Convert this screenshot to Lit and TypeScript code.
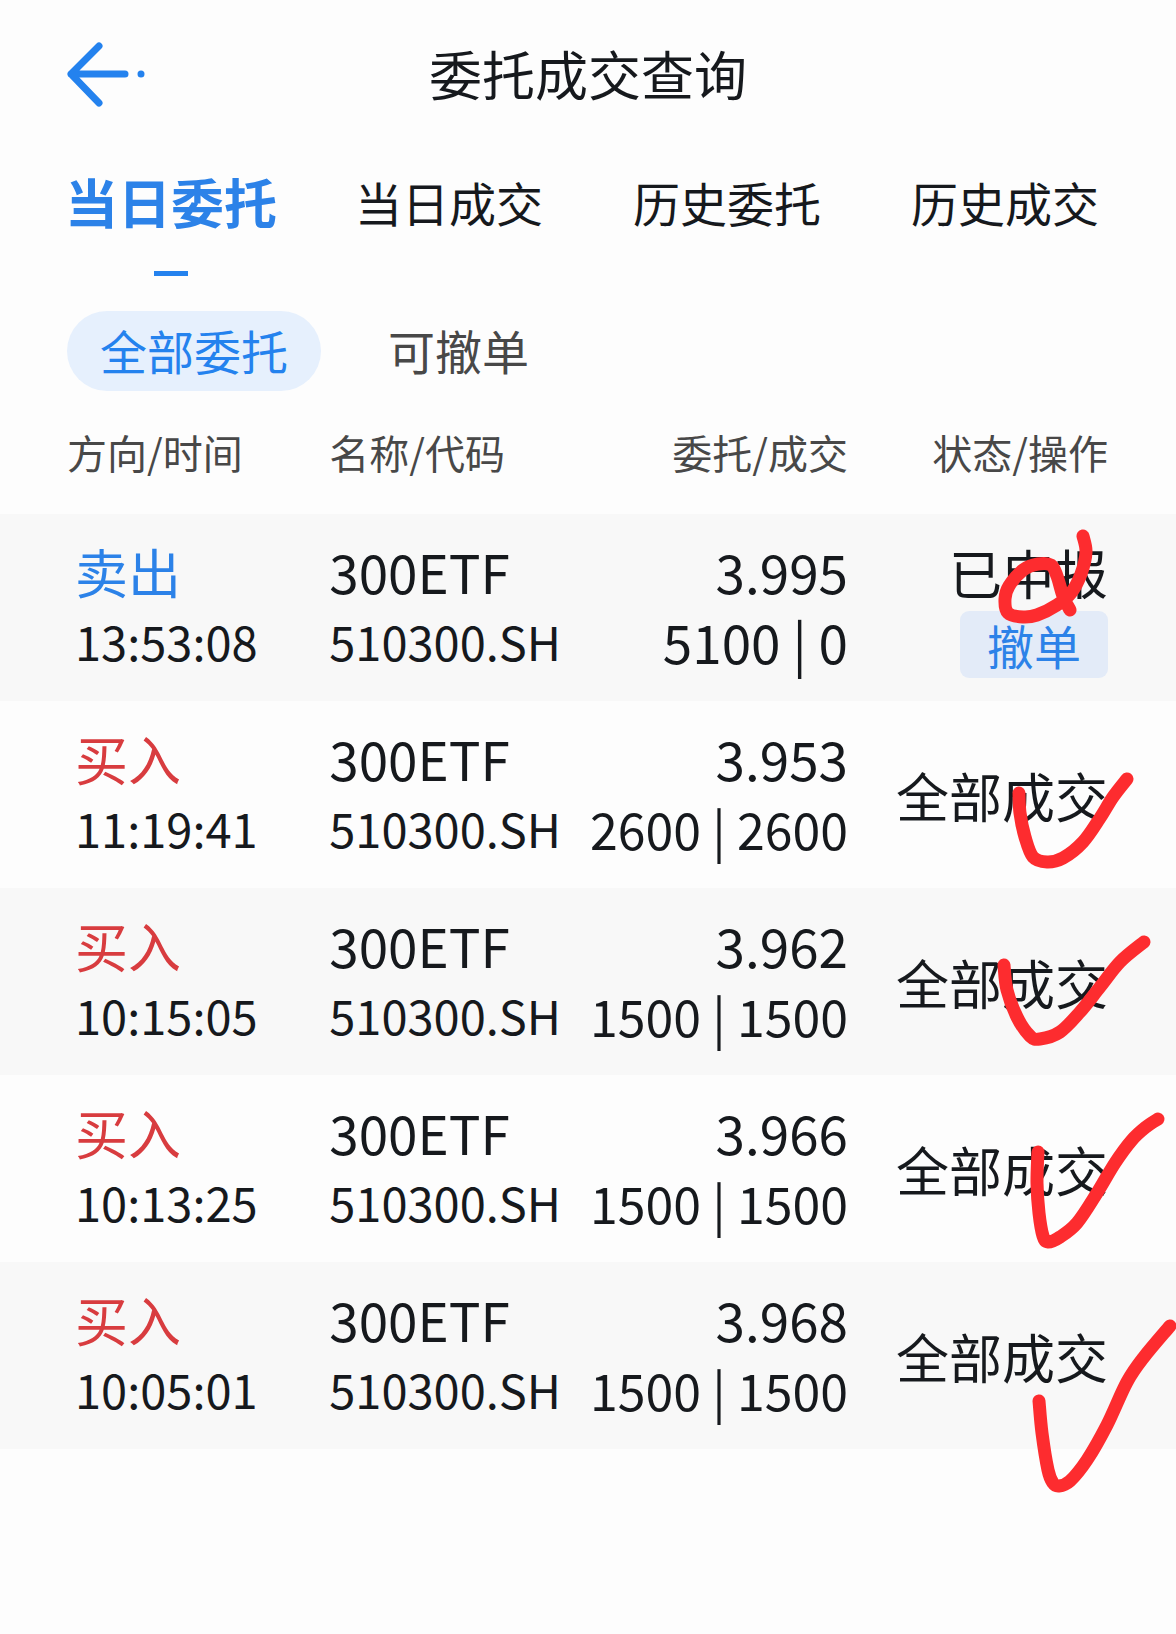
import { LitElement, html, css, svg } from "lit";
import { customElement, property, state } from "lit/decorators.js";
import { classMap } from "lit/directives/class-map.js";

type Point = [number, number];

interface Order {
  side: "卖出" | "买入";
  time: string;
  name: string;
  code: string;
  price: string;
  ordered: number;
  filled: number;
  status: string;
  cancellable?: boolean;
}

const ORDERS: Order[] = [
  { side: "卖出", time: "13:53:08", name: "300ETF", code: "510300.SH", price: "3.995", ordered: 5100, filled: 0, status: "已申报", cancellable: true },
  { side: "买入", time: "11:19:41", name: "300ETF", code: "510300.SH", price: "3.953", ordered: 2600, filled: 2600, status: "全部成交" },
  { side: "买入", time: "10:15:05", name: "300ETF", code: "510300.SH", price: "3.962", ordered: 1500, filled: 1500, status: "全部成交" },
  { side: "买入", time: "10:13:25", name: "300ETF", code: "510300.SH", price: "3.966", ordered: 1500, filled: 1500, status: "全部成交" },
  { side: "买入", time: "10:05:01", name: "300ETF", code: "510300.SH", price: "3.968", ordered: 1500, filled: 1500, status: "全部成交" },
];

const TABS = ["当日委托", "当日成交", "历史委托", "历史成交"];
const FILTERS = ["全部委托", "可撤单"];
const COLUMNS = ["方向/时间", "名称/代码", "委托/成交", "状态/操作"];

/* Hand-drawn pen strokes, as sampled points. */
const STROKES: Point[][] = [
  [[203, 36], [206, 52], [201, 74], [191, 93], [177, 105], [157, 115], [143, 117], [128, 113], [125, 99], [129, 86], [143, 70], [158, 64], [171, 65], [177, 76], [183, 96], [190, 110]],
  [[139, 293], [140, 313], [145, 337], [153, 357], [167, 362], [183, 358], [203, 342], [220, 318], [233, 297], [247, 279]],
  [[124, 465], [127, 490], [137, 517], [150, 536], [160, 539], [180, 532], [200, 512], [220, 487], [240, 462], [264, 442]],
  [[158, 652], [157, 683], [159, 713], [163, 736], [168, 742], [180, 737], [197, 723], [217, 693], [235, 663], [252, 640], [266, 627], [278, 619]],
  [[159, 901], [162, 933], [168, 970], [173, 983], [179, 986], [190, 981], [207, 960], [227, 925], [247, 882], [264, 857], [290, 826]],
];

/* Joins the points with a smooth Catmull-Rom curve. */
function smooth(points: Point[]): string {
  const r = (n: number) => Math.round(n * 10) / 10;
  let d = `M${points[0][0]} ${points[0][1]}`;
  for (let i = 0; i < points.length - 1; i++) {
    const a = points[i - 1] ?? points[i];
    const b = points[i];
    const c = points[i + 1];
    const e = points[i + 2] ?? c;
    d += `C${r(b[0] + (c[0] - a[0]) / 6)} ${r(b[1] + (c[1] - a[1]) / 6)} ${r(c[0] - (e[0] - b[0]) / 6)} ${r(c[1] - (e[1] - b[1]) / 6)} ${c[0]} ${c[1]}`;
  }
  return d;
}

@customElement("order-table")
export class OrderTable extends LitElement {
  @property({ attribute: false }) orders: Order[] = [];

  static styles = css`
    :host {
      display: block;
      position: relative;
    }
    .table {
      width: 100%;
      table-layout: fixed;
      border-collapse: collapse;
    }
    .c1 { width: 28%; }
    .c2 { width: 21%; }
    .c4 { width: 328px; }
    .head {
      height: 123px;
      padding: 0 0 2px;
      font-size: 40px;
      font-weight: 400;
      line-height: 56px;
      text-align: left;
      color: #484848;
      white-space: nowrap;
      box-sizing: border-box;
    }
    .head:first-child { padding-left: 67px; }
    .head:nth-child(n + 3) { text-align: right; }
    .head:last-child { padding-right: 68px; }
    .row { height: 187px; }
    .row:nth-child(odd) { background: #f8f8f8; }
    .cell {
      padding: 0 0 4px;
      box-sizing: border-box;
      white-space: nowrap;
      vertical-align: middle;
    }
    .cell:first-child { padding-left: 75px; }
    .cell:last-child { padding: 0 68px 0 0; }
    .stack {
      display: flex;
      flex-direction: column;
    }
    .end { align-items: flex-end; }
    .actions { gap: 4px; }
    .big {
      font-size: 53px;
      line-height: 70px;
    }
    .mid {
      font-size: 47px;
      line-height: 70px;
    }
    .fit {
      font-size: 50px;
      line-height: 70px;
    }
    .sell { color: #2c82e8; }
    .buy { color: #d83c3f; }
    .cancel {
      height: 67px;
      padding: 0 27px;
      border: 0;
      border-radius: 9px;
      background: #e3ebf8;
      color: #2c82e8;
      font: inherit;
      font-size: 47px;
      line-height: 67px;
    }
    .pen {
      position: absolute;
      top: 0;
      right: 0;
      width: 296px;
      height: 1130px;
      pointer-events: none;
      fill: none;
      stroke: #fd2c2f;
      stroke-width: 13px;
      stroke-linecap: round;
      stroke-linejoin: round;
    }
  `;

  private row(o: Order) {
    const amount = `${o.ordered} | ${o.filled}`;
    return html`
      <tr class="row">
        <td class="cell">
          <div class="stack">
            <span class=${classMap({ big: true, sell: o.side === "卖出", buy: o.side === "买入" })}>${o.side}</span>
            <span class="mid">${o.time}</span>
          </div>
        </td>
        <td class="cell">
          <div class="stack">
            <span class="big">${o.name}</span>
            <span class="mid">${o.code}</span>
          </div>
        </td>
        <td class="cell">
          <div class="stack end">
            <span class="big">${o.price}</span>
            <span class=${amount.length > 8 ? "fit" : "big"}>${amount}</span>
          </div>
        </td>
        <td class="cell">
          <div class="stack end actions">
            <span class="big">${o.status}</span>
            ${o.cancellable ? html`<button class="cancel" type="button">撤单</button>` : null}
          </div>
        </td>
      </tr>
    `;
  }

  render() {
    return html`
      <table class="table">
        <colgroup>
          <col class="c1" /><col class="c2" /><col /><col class="c4" />
        </colgroup>
        <thead>
          <tr>${COLUMNS.map((c) => html`<th class="head" scope="col">${c}</th>`)}</tr>
        </thead>
        <tbody>${this.orders.map((o) => this.row(o))}</tbody>
      </table>
      <svg class="pen" viewBox="0 -109 296 1130" aria-hidden="true">
        ${STROKES.map((points) => svg`<path d=${smooth(points)}></path>`)}
      </svg>
    `;
  }
}

@customElement("app-root")
export class AppRoot extends LitElement {
  @state() private tab = 0;
  @state() private filter = 0;

  static styles = css`
    :host {
      display: block;
      min-height: 100vh;
      background: #fdfdfd;
      color: #16191d;
      font-family: "Noto Sans CJK SC", sans-serif;
    }
    .top {
      display: grid;
      grid-template-columns: 1fr auto 1fr;
      align-items: center;
      height: 148px;
      padding: 0 66px;
    }
    .back {
      justify-self: start;
      display: flex;
      padding: 0;
      border: 0;
      background: none;
      color: #2482ee;
    }
    .arrow {
      width: 80px;
      height: 66px;
      fill: none;
      stroke: currentColor;
      stroke-width: 7px;
      stroke-linecap: round;
      stroke-linejoin: round;
    }
    .title {
      margin: 0;
      padding-bottom: 3px;
      font-size: 53px;
      font-weight: 400;
      line-height: 72px;
    }
    .tabs {
      display: grid;
      grid-template-columns: repeat(4, 1fr);
      padding: 0 32px;
    }
    .tab {
      display: flex;
      flex-direction: column;
      align-items: center;
      height: 128px;
      padding: 18px 0 0;
      border: 0;
      background: none;
      color: inherit;
      font: inherit;
      font-size: 47px;
      line-height: 72px;
      white-space: nowrap;
    }
    .tab.on {
      padding-top: 17px;
      color: #2c82e8;
      font-size: 53px;
      font-weight: 600;
    }
    .tab.on::after {
      content: "";
      width: 34px;
      height: 7px;
      margin-top: 34px;
      background: #2482ee;
    }
    .filters {
      display: flex;
      gap: 34px;
      padding: 35px 67px 0;
    }
    .filter {
      height: 80px;
      padding: 0 33px 3px;
      border: 0;
      border-radius: 40px;
      background: none;
      color: #484848;
      font: inherit;
      font-size: 47px;
      line-height: 76px;
      white-space: nowrap;
    }
    .filter.on {
      background: #e6f0fd;
      color: #2482ee;
    }
  `;

  render() {
    return html`
      <header class="top">
        <button class="back" type="button" aria-label="返回">
          <svg class="arrow" viewBox="0 0 80 66" aria-hidden="true">
            <path d="M33 5L5 33L33 62M5 33H59M75 33h0.01"></path>
          </svg>
        </button>
        <h1 class="title">委托成交查询</h1>
      </header>
      <nav class="tabs">
        ${TABS.map((t, i) => html`<button type="button" class=${classMap({ tab: true, on: i === this.tab })} @click=${() => (this.tab = i)}>${t}</button>`)}
      </nav>
      <div class="filters">
        ${FILTERS.map((f, i) => html`<button type="button" class=${classMap({ filter: true, on: i === this.filter })} @click=${() => (this.filter = i)}>${f}</button>`)}
      </div>
      <order-table .orders=${ORDERS}></order-table>
    `;
  }
}
